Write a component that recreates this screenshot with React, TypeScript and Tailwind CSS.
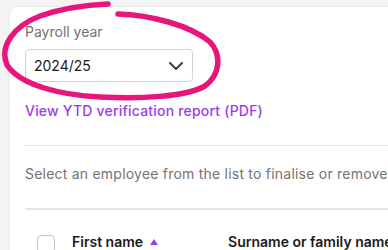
import { ChevronDown } from "lucide-react";

function PayrollYear() {
  return (
    <div className="flex flex-col">
      <label className="text-[14px] leading-5 text-[#737373]">Payroll year</label>
      <div className="mt-[7px] flex h-[33px] w-[168px] items-center justify-between rounded-[4px] border border-[#d4d4d4] pl-[8px] pr-[4px]">
        <span className="text-[14px] text-[#1a1a1a]">2024/25</span>
        <ChevronDown className="h-[24px] w-[24px] text-[#404040]" strokeWidth={2.1} />
      </div>
      <a className="mt-[19px] text-[14px] font-medium leading-5 tracking-[0.2px] text-[#9b3de8]" href="#">
        View YTD verification report (PDF)
      </a>
    </div>
  )
}

// hand-drawn highlight round the payroll year picker
function Scribble() {
  return (
    <svg className="pointer-events-none absolute left-0 top-0" width="230" height="105" viewBox="0 0 230 105" fill="none">
      <path
        d="M118 14 C150 15, 190 25, 210 42 C222 55, 220 75, 205 86 C185 97, 140 99, 100 97 C60 95, 20 85, 7 65 C-1 46, 14 26, 40 16 C60 9, 85 5, 108 4"
        stroke="#e8157c"
        strokeWidth={5.5}
        strokeLinecap="round"
      />
    </svg>
  )
}

export default function App() {
  return (
    <div className="relative h-[250px] w-[388px] overflow-hidden bg-[#f4f4f4] font-['Inter',sans-serif]">
      <div className="ml-[10px] mt-[7px] w-[420px] rounded-tl-[8px] bg-white pl-[15px] pt-[15px] shadow-[0_0_4px_rgba(0,0,0,0.06)]">
        <PayrollYear />
        <div className="mt-[24px] h-px bg-[#e5e5e5]" />
        <p className="mt-[18px] whitespace-nowrap text-[14px] leading-5 tracking-[0.22px] text-[#737373]">
          Select an employee from the list to finalise or remove
        </p>
        <div className="mt-[24px] h-[2px] bg-[#e5e5e5]" />
        <div className="flex h-[60px] items-start pt-[20px] whitespace-nowrap">
          <div className="ml-[12px] mt-[5px] h-[18px] w-[18px] rounded-[4px] border border-[#c4c4c4]" />
          <span className="ml-[17px] text-[14px] font-semibold leading-6 text-[#1a1a1a]">First name</span>
          <span className="ml-[7px] mt-[9px] h-0 w-0 border-x-[4px] border-b-[6px] border-x-transparent border-b-[#9b3de8]" />
          <span className="ml-[70px] text-[14px] font-semibold leading-6 text-[#1a1a1a]">Surname or family name</span>
        </div>
      </div>
      <Scribble />
    </div>
  )
}
